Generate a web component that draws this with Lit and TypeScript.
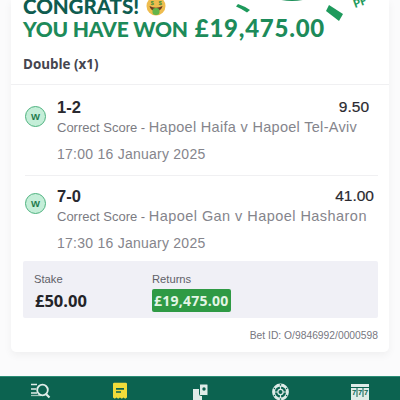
import { LitElement, html, css, svg } from "lit";
import { customElement } from "lit/decorators.js";

const FONT = css`"Liberation Sans", Arial, sans-serif`;

const legs = [
  { score: "1-2", odds: "9.50", oddsPad: 9, track: 0.3, match: "Hapoel Haifa v Hapoel Tel-Aviv", time: "17:00 16 January 2025" },
  { score: "7-0", odds: "41.00", oddsPad: 4, track: 0.45, match: "Hapoel Gan v Hapoel Hasharon", time: "17:30 16 January 2025" },
];

@customElement("app-root")
export class AppRoot extends LitElement {
  static styles = css`
    :host { display: block; width: 400px; height: 400px; overflow: hidden; position: relative; background: #fbfbfc; font-family: ${FONT}; }
    .page { display: flex; flex-direction: column; height: 400px; }
    .card { margin: 0 11px; width: 378px; height: 352px; flex: none; background: #fff; box-shadow: 0 3px 8px rgba(0,0,0,.05); display: flex; flex-direction: column; position: relative; border-radius: 0 0 5px 5px; }
    .hero { height: 40px; padding-left: 12px; position: relative; }
    .l1 { font: 900 20.6px/24px Lato, sans-serif; color: #0f5c50; margin-top: -6px; display: flex; align-items: center; gap: 7px; height: 24px; letter-spacing: -.1px; }
    .l2 { font: 900 21px/24px Lato, sans-serif; color: #1d8b5a; margin-top: -2px; white-space: nowrap; letter-spacing: -.2px; }
    .l2 b { margin-left: 7px; font-size: 24px; font-weight: 900; letter-spacing: .75px; }
    .emoji { width: 20px; height: 20px; display: block; }
    .deco { position: absolute; top: -4px; left: 220px; width: 150px; height: 30px; }
    .title { font: 700 13.4px/18px "Open Sans", sans-serif; color: #45454f; padding: 15px 12px 0; height: 44px; box-sizing: border-box; }
    .legs { border-top: 1px solid #f0f0f2; padding: 0 11px 0 14px; display: flex; flex-direction: column; }
    .leg { display: grid; grid-template-columns: 32px 1fr auto; align-content: start; height: 90px; box-sizing: border-box; padding-top: 13px; }
    .leg + .leg { border-top: 1px solid #f0f0f2; height: 86px; padding-top: 11px; }
    .badge { width: 21px; height: 21px; box-sizing: border-box; border-radius: 50%; border: 1px solid #4eb27f; background: #c4eed8; color: #1f7b4d; font: 700 9.5px/19px ${FONT}; text-align: center; margin-top: 8px; grid-row: 1 / 3; }
    .leg + .leg .badge { margin-top: 6px; }
    .score { font: 700 16.5px/18px ${FONT}; color: #2a2a30; }
    .odds { font: 400 15.5px/18px ${FONT}; color: #2a2a30; -webkit-text-stroke: .2px #2a2a30; }
    .mkt { grid-column: 2 / 4; font: 400 13px/16px ${FONT}; color: #7b7b82; white-space: nowrap; margin-top: 3px; }
    .mkt span { font-size: 14.5px; color: #85858c; }
    .time { grid-column: 2 / 4; font: 400 14px/18px ${FONT}; color: #85858c; letter-spacing: .25px; margin-top: 9px; }
    .totals { margin: 0 11px 0 12px; background: #f0f0f6; height: 57px; border-radius: 2px; display: grid; grid-template-columns: 118px 1fr; padding: 11px 0 0 11px; box-sizing: border-box; flex: none; }
    .lab { font: 400 11.2px/14px ${FONT}; color: #5f5f68; }
    .stake { font: 700 16.5px/24px "Open Sans", sans-serif; color: #232328; margin: 3px 0 0 1px; }
    .ret { display: inline-block; background: #2f9a45; color: #e3f5e5; font: 700 14px/23px "Open Sans", sans-serif; padding: 0 2px; border-radius: 2px; margin-top: 3px; letter-spacing: .25px; white-space: nowrap; }
    .betid { text-align: right; font: 400 10.3px/14px ${FONT}; color: #77777f; padding: 11px 11px 0 0; }
    .spacer { height: 24px; flex: none; }
    nav { flex: 1; background: #0c6350; border-top: 1px solid #2b8d76; display: grid; grid-template-columns: repeat(5, 80px); justify-items: center; padding-top: 5px; box-sizing: border-box; }
    nav svg { display: block; width: 22px; height: 22px; }
  `;

  private emoji() {
    return html`<svg class="emoji" viewBox="0 0 20 20">
      <circle cx="10" cy="10" r="9.5" fill="#eebc4e"/>
      <path d="M3.5 10q6.5 3.5 13 0q-1 5-6.5 5t-6.500-5z" fill="#6d3b22"/>
      <rect x="6.5" y="12" width="7" height="7" rx="3" fill="#63b54a"/>
      <text x="6" y="9" font-size="6" font-weight="700" fill="#3c8f3a" text-anchor="middle" font-family="Liberation Sans">$</text>
      <text x="14" y="9" font-size="6" font-weight="700" fill="#3c8f3a" text-anchor="middle" font-family="Liberation Sans">$</text>
    </svg>`;
  }

  private icons() {
    const w = "#dfece8";
    const d = "#0c6350";
    return [
      svg`<path d="M2 2.5h6M2 7h5M2 11h6" stroke="${w}" stroke-width="1.5" fill="none"/><path d="M2 13.5h10" stroke="${w}" stroke-width="1.3" opacity=".7"/><circle cx="13.5" cy="8" r="5.3" stroke="${w}" stroke-width="1.8" fill="none"/><path d="M17 12l3.5 3.5" stroke="${w}" stroke-width="2.2"/>`,
      svg`<path d="M4 2q0-1.2 1.2-1.2h11.6q1.2 0 1.2 1.2v13.5l-1.8 1.2-1.7-1.2-1.7 1.2-1.8-1.2-1.800 1.2-1.700-1.200-1.700 1.200-1.800-1.200z" fill="#f1dc3a"/><path d="M7 6.8h8M7 10h5" stroke="${d}" stroke-width="1.7"/>`,
      svg`<path d="M4 7h6v3h3v10H4z" fill="${w}"/><rect x="10.5" y="2" width="8.5" height="11.5" rx="1" fill="${w}" stroke="${d}" stroke-width="1"/><circle cx="15" cy="7" r="1.7" fill="${d}"/>`,
      svg`<circle cx="11.5" cy="10" r="7" fill="none" stroke="${w}" stroke-width="2.8"/><circle cx="11.5" cy="10" r="2.6" fill="none" stroke="${w}" stroke-width="1.2"/><path d="M11.5 3v4.5M11.5 12.5V17M4.5 10H9M14 10h4.5" stroke="${w}" stroke-width="1.2"/><g fill="${d}"><circle cx="11.5" cy="2.9" r=".8"/><circle cx="11.5" cy="17.1" r=".8"/><circle cx="5.4" cy="6.5" r=".8"/><circle cx="17.6" cy="6.5" r=".8"/><circle cx="5.4" cy="13.5" r=".8"/><circle cx="17.6" cy="13.5" r=".8"/></g>`,
      svg`<rect x="2" y="2" width="18" height="16" fill="${w}"/><path d="M2 5.5h18M8 6v9M14 6v9" stroke="${d}" stroke-width="1"/><g font-size="7.5" font-weight="700" fill="${d}" font-family="Liberation Sans" text-anchor="middle"><text x="5" y="13">7</text><text x="11" y="13">7</text><text x="17" y="13">7</text></g>`,
    ];
  }

  render() {
    return html`<div class="page">
      <div class="card">
        <div class="hero">
          <div class="l1"><span>CONGRATS!</span>${this.emoji()}</div>
          <div class="l2">YOU HAVE WON<b>£19,475.00</b></div>
          <svg class="deco" viewBox="0 0 150 30">
            <path d="M7 8q6 2 12 6l-3 2.5q-5-3.5-11-6z" fill="#1e9a5c"/>
            <path d="M46 3q15 4 30 0v-3h-30z" fill="#1b8f58"/>
            <path d="M98 9l14 9-4 7-13-10z" fill="#1e9a5c"/>
            <text x="124" y="12" font-size="11" font-weight="900" fill="#1e9a5c" font-family="Lato" transform="rotate(-20 124 12)">PF</text>
          </svg>
        </div>
        <div class="title">Double (x1)</div>
        <div class="legs">
          ${legs.map(l => html`<div class="leg">
            <div class="badge">W</div>
            <div class="score">${l.score}</div>
            <div class="odds" style="padding-right:${l.oddsPad}px">${l.odds}</div>
            <div class="mkt">Correct Score - <span style="letter-spacing:${l.track}px">${l.match}</span></div>
            <div class="time">${l.time}</div>
          </div>`)}
        </div>
        <div class="totals">
          <div><div class="lab">Stake</div><div class="stake">£50.00</div></div>
          <div><div class="lab">Returns</div><div class="ret">£19,475.00</div></div>
        </div>
        <div class="betid">Bet ID: O/9846992/0000598</div>
      </div>
      <div class="spacer"></div>
      <nav>${this.icons().map(i => html`<svg viewBox="0 0 22 22">${i}</svg>`)}</nav>
    </div>`;
  }
}
